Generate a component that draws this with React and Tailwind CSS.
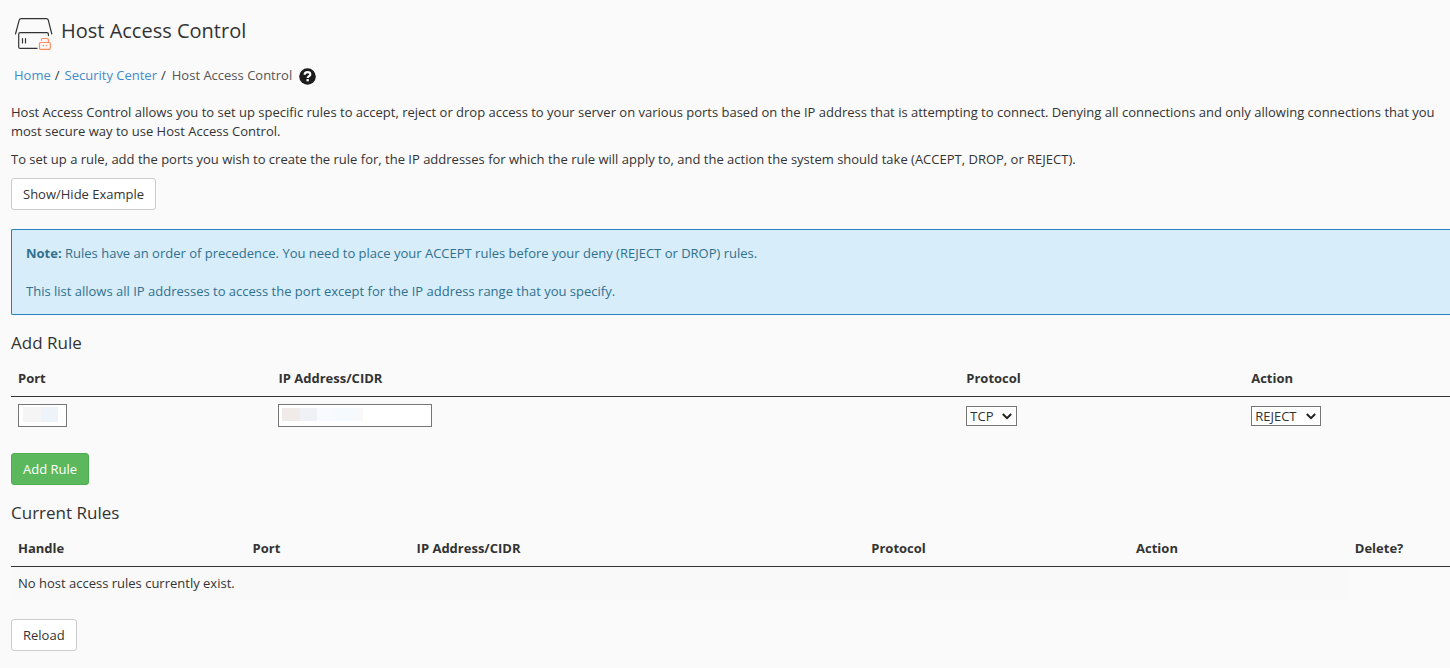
import React, { useState } from "react"

const HostIcon = () => (
    <svg
        className="w-[40px] h-[36px] shrink-0"
        viewBox="0 0 40 36"
        fill="none"
        aria-hidden="true"
    >
        <g stroke="#333" strokeWidth="1.2" strokeLinecap="round">
            <path d="M1.5 17L5.2 3.2Q5.6 1.6 7.2 1.6H32.3Q33.9 1.6 34.3 3.2L37.8 17" />
            <path d="M34.4 18.6V17.2Q34.4 15.7 32.8 15.7H6.3Q4.7 15.7 4.7 17.2V29.9Q4.7 31.4 6.3 31.4H23" />
            <path d="M8.5 21.5V26M11.5 21.5V26" />
        </g>
        <g stroke="#ff8a5c" strokeWidth="1.2" strokeLinecap="round">
            <rect x="25.5" y="25.5" width="10.8" height="6.8" rx="1.1" />
            <path d="M27.5 23.3V22.6Q27.5 21.5 28.7 21.5H33Q34.4 21.5 34.4 22.8V25.3" />
        </g>
        <g fill="#ff8a5c">
            <circle cx="29.4" cy="28.6" r="0.8" />
            <circle cx="32.5" cy="28.6" r="0.8" />
        </g>
    </svg>
)

const HelpIcon = () => (
    <svg className="w-[17px] h-[17px]" viewBox="0 0 17 17" aria-hidden="true">
        <circle cx="8.5" cy="8.5" r="8.3" fill="#1c1c1c" />
        <path
            d="M5.6 6.7C5.7 4.9 6.9 4.1 8.5 4.1C10.2 4.1 11.3 5 11.3 6.4C11.3 8.2 8.7 8.2 8.7 10.1"
            fill="none"
            stroke="#fff"
            strokeWidth="2.2"
        />
        <rect x="7.5" y="11.1" width="2.3" height="2.2" fill="#fff" />
    </svg>
)

const Chevron = () => (
    <svg
        className="absolute right-[5px] top-[7px] w-[10px] h-[7px] pointer-events-none"
        viewBox="0 0 10 7"
        fill="none"
        aria-hidden="true"
    >
        <path d="M0.8 1L5 5.2L9.2 1" stroke="#222" strokeWidth="2" />
    </svg>
)

const Button = ({ children, primary }) => (
    <button
        type="button"
        className={`block h-8 px-[11px] rounded-[3px] border cursor-pointer ${
            primary
                ? "bg-[#5cb85c] border-[#4cae4c] text-white"
                : "bg-white border-[#ccc] text-[#333]"
        }`}
    >
        {children}
    </button>
)

const SelectBox = ({ label, options, value, onChange, width }) => (
    <div className={`relative ${width}`}>
        <select
            aria-label={label}
            value={value}
            onChange={(e) => onChange(e.target.value)}
            className="block w-full h-5 pl-[3px] appearance-none bg-white border border-[#767676] leading-[18px]"
        >
            {options.map((option) => (
                <option key={option}>{option}</option>
            ))}
        </select>
        <Chevron />
    </div>
)

const Th = ({ children, className = "" }) => (
    <th
        scope="col"
        className={`pl-[7px] pt-[7px] pb-2 text-left font-bold ${className}`}
    >
        {children}
    </th>
)

const App = () => {
    const [protocol, setProtocol] = useState("TCP")
    const [action, setAction] = useState("REJECT")

    return (
        <div className="min-h-screen pl-[11px] pb-4 bg-[#fafafa] font-['Open_Sans','Noto_Sans',sans-serif] text-[13px] leading-[19px] text-[#333]">
            <header className="flex items-center pl-[3px] pt-[17px] gap-[7px]">
                <HostIcon />
                <h1 className="pb-2 text-[20px] leading-7">
                    Host Access Control
                </h1>
            </header>
            <nav
                aria-label="Breadcrumb"
                className="flex items-center pl-[3px] pt-[13px]"
            >
                <a href="#home" className="text-[#428bca]">
                    Home
                </a>
                <span className="pl-1 pr-[5px]">/</span>
                <a href="#security" className="text-[#428bca]">
                    Security Center
                </a>
                <span className="pl-1 pr-[6px]">/</span>
                <span className="text-[#555]">Host Access Control</span>
                <a href="#help" aria-label="Help" className="pl-[7px] pt-[2px]">
                    <HelpIcon />
                </a>
            </nav>

            <p className="pt-[18px]">
                Host Access Control allows you to set up specific rules to
                accept, reject or drop access to your server on various ports
                based on the IP address that is attempting to connect. Denying
                all connections and only allowing connections that you
                <br />
                most secure way to use Host Access Control.
            </p>
            <p className="py-[9px]">
                To set up a rule, add the ports you wish to create the rule
                for, the IP addresses for which the rule will apply to, and the
                action the system should take (ACCEPT, DROP, or REJECT).
            </p>
            <Button>Show/Hide Example</Button>

            <div className="mt-[19px] px-[14px] pt-[14px] pb-[13px] rounded-l-[2px] border border-r-0 border-[#2980b9] bg-[#d7edf9] text-[#31708f]">
                <p>
                    <strong>Note:</strong> Rules have an order of precedence.
                    You need to place your ACCEPT rules before your deny
                    (REJECT or DROP) rules.
                </p>
                <p className="pt-[19px]">
                    This list allows all IP addresses to access the port except
                    for the IP address range that you specify.
                </p>
            </div>

            <h2 className="pt-[18px] pb-[10px] text-[17px]">Add Rule</h2>
            <table className="w-full table-fixed">
                <thead>
                    <tr className="border-b border-[#333]">
                        <Th className="w-[18.1%]">Port</Th>
                        <Th className="w-[47.8%]">IP Address/CIDR</Th>
                        <Th className="w-[19.8%]">Protocol</Th>
                        <Th>Action</Th>
                    </tr>
                </thead>
                <tbody>
                    <tr>
                        <td className="p-[7px]">
                            <div className="relative w-[49px]">
                                <input
                                    aria-label="Port"
                                    className="block w-full h-[23px] px-1 bg-white border border-[#767676]"
                                />
                                <div className="absolute left-[5px] top-[3px] flex h-[15px] pointer-events-none">
                                    <span className="w-[18px] bg-[#f5f5f5]" />
                                    <span className="w-[17px] bg-[#edf3f8]" />
                                </div>
                            </div>
                        </td>
                        <td className="p-[7px]">
                            <div className="relative w-[154px]">
                                <input
                                    aria-label="IP Address/CIDR"
                                    className="block w-full h-[23px] px-1 bg-white border border-[#767676]"
                                />
                                <div className="absolute left-1 top-1 flex h-[13px] pointer-events-none">
                                    <span className="w-[18px] bg-[#f0ebe9]" />
                                    <span className="w-[17px] bg-[#f0f0f7]" />
                                    <span className="w-[18px] bg-[#f9faff]" />
                                    <span className="w-[18px] bg-[#f5fafe]" />
                                    <span className="w-[10px] bg-[#f9f9f9]" />
                                </div>
                            </div>
                        </td>
                        <td className="p-[7px]">
                            <SelectBox
                                label="Protocol"
                                options={["TCP", "UDP"]}
                                value={protocol}
                                onChange={setProtocol}
                                width="w-[51px]"
                            />
                        </td>
                        <td className="p-[7px]">
                            <SelectBox
                                label="Action"
                                options={["ACCEPT", "REJECT", "DROP"]}
                                value={action}
                                onChange={setAction}
                                width="w-[70px]"
                            />
                        </td>
                    </tr>
                </tbody>
            </table>
            <div className="pt-[19px]">
                <Button primary>Add Rule</Button>
            </div>

            <h2 className="pt-[18px] pb-[10px] text-[17px]">Current Rules</h2>
            <table className="w-full table-fixed">
                <thead>
                    <tr className="border-b border-[#333]">
                        <Th className="w-[16.3%]">Handle</Th>
                        <Th className="w-[11.4%]">Port</Th>
                        <Th className="w-[31.6%]">IP Address/CIDR</Th>
                        <Th className="w-[18.4%]">Protocol</Th>
                        <Th className="w-[15.2%]">Action</Th>
                        <Th>Delete?</Th>
                    </tr>
                </thead>
                <tbody>
                    <tr>
                        <td colSpan={5} className="p-[7px] bg-[#f9f9f9]">
                            No host access rules currently exist.
                        </td>
                    </tr>
                </tbody>
            </table>
            <div className="pt-[19px]">
                <Button>Reload</Button>
            </div>
        </div>
    )
}

export default App
